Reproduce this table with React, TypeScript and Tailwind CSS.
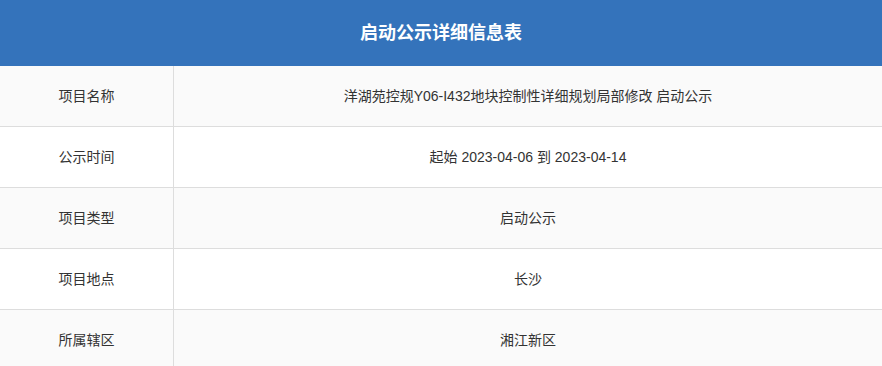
import React from "react";

const rows: [string, string][] = [
  ["项目名称", "洋湖苑控规Y06-I432地块控制性详细规划局部修改 启动公示"],
  ["公示时间", "起始 2023-04-06 到 2023-04-14"],
  ["项目类型", "启动公示"],
  ["项目地点", "长沙"],
  ["所属辖区", "湘江新区"],
];

export default function App() {
  return (
    <div
      className="w-[882px] h-[366px] overflow-hidden bg-white"
      style={{ fontFamily: '"Liberation Sans", "Noto Sans CJK SC", sans-serif' }}
    >
      <div className="h-[66px] bg-[#3473bb] flex items-center justify-center">
        <span className="text-white text-[18px] font-bold">启动公示详细信息表</span>
      </div>
      {rows.map(([k, v], i) => (
        <div
          key={k}
          className={`flex h-[61px] border-b border-[#dddddd] ${i % 2 === 0 ? "bg-[#fafafa]" : "bg-white"}`}
        >
          <div className="w-[174px] shrink-0 border-r border-[#dddddd] flex items-center justify-center text-[14px] text-[#333333]">
            {k}
          </div>
          <div className="flex-1 flex items-center justify-center text-[14px] text-[#333333]">
            {v}
          </div>
        </div>
      ))}
    </div>
  );
}
